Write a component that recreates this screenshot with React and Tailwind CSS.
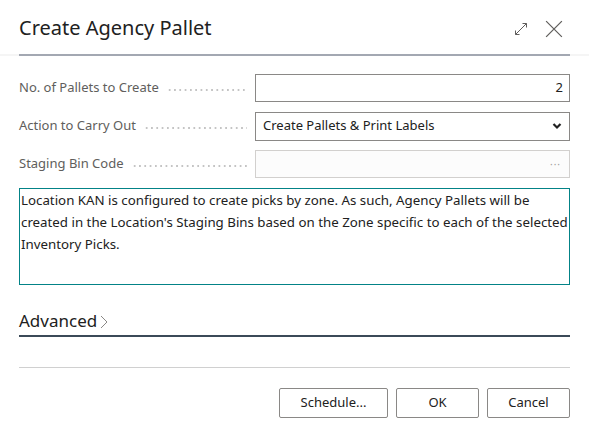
import React from 'react';

const Leader = () => (
  <div className="flex-1 mx-2 mt-[3px] h-[2px] bg-[radial-gradient(circle,#c4c4c4_1px,transparent_1.2px)] bg-[length:5.3px_2px] bg-repeat-x"></div>
);

const Field = ({ label, children }) => (
  <div className="flex items-center h-[28px]">
    <div className="w-[236px] flex items-center text-[#605e5c]">
      <span className="whitespace-nowrap">{label}</span>
      <Leader />
    </div>
    {children}
  </div>
);

export default function App() {
  return (
    <div className="w-[589px] h-[434px] bg-white text-[13px] text-[#212121] font-['Segoe_UI','Noto_Sans',sans-serif]">
      <div className="flex items-center justify-between px-[19px] pt-[11px] h-[54px]">
        <div className="text-[20px] leading-[28px] mt-[-6px] pb-[4px]">Create Agency Pallet</div>
        <div className="flex items-center gap-[16px] mr-[7px] mt-[-8px] text-[#605e5c]">
          <svg width="16" height="16" viewBox="0 0 16 16" fill="none" stroke="currentColor" strokeWidth="1">
            <path d="M2.5 13.5L13.5 2.5M9.5 2.5h4v4M2.5 9.5v4h4" />
          </svg>
          <svg width="18" height="18" viewBox="0 0 16 16" fill="none" stroke="currentColor" strokeWidth="1.1">
            <path d="M1 1L15 15M15 1L1 15" />
          </svg>
        </div>
      </div>
      <div className="bg-[#f5f5f5] h-[2px] px-[19px]">
        <div className="h-[2px] bg-[#a3a8b2]"></div>
      </div>

      <div className="px-[19px] pt-[18px]">
        <div className="flex flex-col gap-[10px]">
          <Field label="No. of Pallets to Create">
            <div className="flex-1 h-[28px] border border-[#8a8886] flex items-center justify-end px-[6px]">2</div>
          </Field>
          <Field label="Action to Carry Out">
            <div className="flex-1 h-[29px] border border-[#8a8886] flex items-center justify-between px-[7px]">
              <span>Create Pallets &amp; Print Labels</span>
              <svg width="10" height="8" viewBox="0 0 10 8" fill="none" stroke="#212121" strokeWidth="2.2">
                <path d="M1.5 2l3.5 3.5L8.5 2" />
              </svg>
            </div>
          </Field>
          <Field label="Staging Bin Code">
            <div className="flex-1 h-[28px] border border-[#d2d0ce] bg-[#fcfcfc] flex items-center justify-end px-[8px] text-[#a19f9d] text-[10px] tracking-[1px]">···</div>
          </Field>
        </div>

        <div className="mt-[10px] h-[97px] border border-[#038387] px-[1px] pt-[0px] text-[13.3px] leading-[22px]">
          Location KAN is configured to create picks by zone. As such, Agency Pallets will be created in the Location's Staging Bins based on the Zone specific to each of the selected Inventory Picks.
        </div>

        <div className="mt-[24px] border-b-[2px] border-[#3b4a58] pb-[2px] flex items-center">
          <span className="text-[17px] leading-[24px]">Advanced</span>
          <svg width="10" height="16" viewBox="0 0 10 16" fill="none" stroke="#8a8886" strokeWidth="1" className="ml-[2px] mt-[2px]">
            <path d="M2 2l6 6-6 6" />
          </svg>
        </div>

        <div className="mt-[30px] h-[1px] bg-[#d0d0d0]"></div>

        <div className="mt-[20px] flex justify-end gap-[8px]">
          <button className="w-[109px] h-[30px] border border-[#8a8886] rounded-[2px] bg-white">Schedule...</button>
          <button className="w-[83px] h-[30px] border border-[#8a8886] rounded-[2px] bg-white">OK</button>
          <button className="w-[83px] h-[30px] border border-[#8a8886] rounded-[2px] bg-white">Cancel</button>
        </div>
      </div>
    </div>
  );
}
